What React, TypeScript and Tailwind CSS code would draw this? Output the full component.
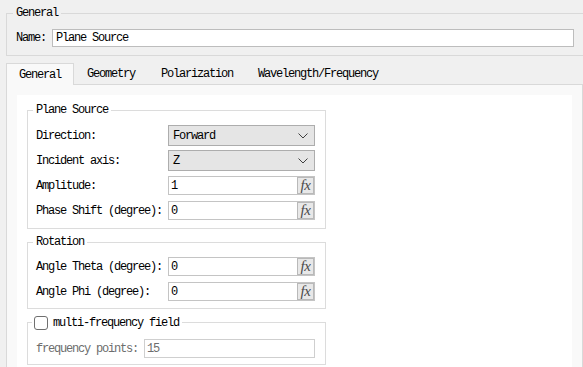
import React from "react";

function Chevron() {
  return (
    <svg width="10" height="6" viewBox="0 0 10 6" className="mr-[6px]">
      <polyline points="0.5,0.5 5,5 9.5,0.5" fill="none" stroke="#404040" strokeWidth="1" />
    </svg>
  );
}

function Combo({ value }: { value: string }) {
  return (
    <div className="w-[147px] h-[21px] border border-[#adadad] bg-[#e5e5e5] flex items-center justify-between pl-[4px]">
      <span>{value}</span>
      <Chevron />
    </div>
  );
}

function FxInput({ value }: { value: string }) {
  return (
    <div className="w-[147px] h-[19px] border border-[#c4c4c4] bg-white flex items-stretch">
      <span className="flex-1 pl-[2px] flex items-center">{value}</span>
      <span className="w-[17px] border border-[#b9b9b9] bg-[#e8e8e8] flex items-center justify-center font-['Liberation_Serif','Times_New_Roman',serif] italic text-[15px] leading-[15px] tracking-[-0.3px] text-[#4a4a4a]">
        fx
      </span>
    </div>
  );
}

function Row({ label, children }: { label: string; children: React.ReactNode }) {
  return (
    <div className="flex items-center h-[21px] pl-[8px]">
      <span className="w-[132px] whitespace-pre">{label}</span>
      {children}
    </div>
  );
}

export default function App() {
  return (
    <div className="w-[583px] h-[367px] overflow-hidden bg-[#f0f0f0] text-black font-['Liberation_Mono',monospace] text-[12px] leading-[14px] tracking-[-1.2px]">
      <fieldset className="ml-[6px] mt-[6px] w-[600px] border border-[#d9d9d9] px-0 pt-[9px] pb-[8px]">
        <legend className="ml-[6px] px-[3px]">General</legend>
        <div className="flex items-center pl-[9px]">
          <span className="w-[36px]">Name:</span>
          <div className="w-[522px] h-[18px] border border-[#bdbdbd] bg-white pl-[3px] flex items-center">
            Plane Source
          </div>
        </div>
      </fieldset>

      <div className="flex ml-[6px] mt-[7px] items-start">
        <div className="h-[22px] -mb-px relative z-10 border border-b-0 border-[#d9d9d9] bg-[#f9f9f9] px-[12px] flex items-center">
          General
        </div>
        <div className="h-[21px] px-[13px] flex items-center">Geometry</div>
        <div className="h-[21px] px-[13px] flex items-center">Polarization</div>
        <div className="h-[21px] px-[12px] flex items-center">Wavelength/Frequency</div>
      </div>

      <div className="ml-[6px] w-[577px] h-[300px] border border-[#d9d9d9] bg-[#f9f9f9] pt-[10px] px-[10px]">
        <div className="bg-white h-[400px] pl-[10px] pt-[8px]">
          <fieldset className="w-[299px] border border-[#dcdcdc] px-0 pt-[8px] pb-[7px]">
            <legend className="ml-[5px] px-[3px]">Plane Source</legend>
            <div className="flex flex-col gap-[4px]">
              <Row label="Direction:">
                <Combo value="Forward" />
              </Row>
              <Row label="Incident axis:">
                <Combo value="Z" />
              </Row>
              <Row label="Amplitude:">
                <FxInput value="1" />
              </Row>
              <Row label="Phase Shift (degree):">
                <FxInput value="0" />
              </Row>
            </div>
          </fieldset>

          <fieldset className="mt-[6px] w-[299px] border border-[#dcdcdc] px-0 pt-[7px] pb-[6px]">
            <legend className="ml-[5px] px-[3px]">Rotation</legend>
            <div className="flex flex-col gap-[4px]">
              <Row label="Angle Theta (degree):">
                <FxInput value="0" />
              </Row>
              <Row label="Angle Phi (degree):">
                <FxInput value="0" />
              </Row>
            </div>
          </fieldset>

          <fieldset className="mt-[6px] w-[299px] border border-[#dcdcdc] px-0 pt-[8px] pb-[5px]">
            <legend className="ml-[4px] pl-[2px] pr-[3px] flex items-center gap-[5px] h-[15px]">
              <span className="w-[14px] h-[14px] rounded-[3px] border border-[#6f6f6f] bg-white inline-block" />
              <span>multi-frequency field</span>
            </legend>
            <div className="flex items-center h-[21px] pl-[8px]">
              <span className="w-[108px] text-[#6d6d6d]">frequency points:</span>
              <div className="w-[171px] h-[19px] border border-[#cfcfcf] bg-white pl-[2px] flex items-center text-[#6d6d6d]">
                15
              </div>
            </div>
          </fieldset>
        </div>
      </div>
    </div>
  );
}
